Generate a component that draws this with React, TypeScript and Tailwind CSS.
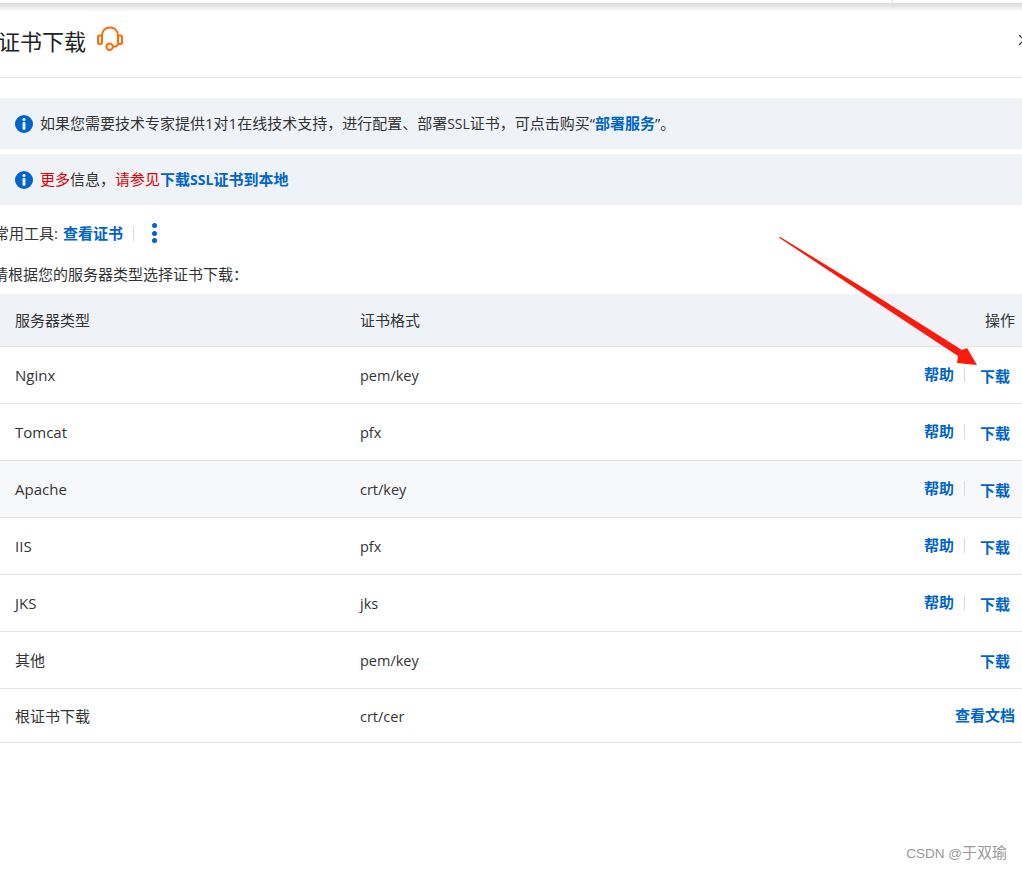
import { X } from 'lucide-react';

const rows = [
  { name: 'Nginx', format: 'pem/key', help: true },
  { name: 'Tomcat', format: 'pfx', help: true },
  { name: 'Apache', format: 'crt/key', help: true, shaded: true },
  { name: 'IIS', format: 'pfx', help: true },
  { name: 'JKS', format: 'jks', help: true },
  { name: '其他', format: 'pem/key', help: false },
];

function InfoIcon() {
  return (
    <svg width="18" height="18" viewBox="0 0 18 18" className="shrink-0">
      <circle cx="9" cy="9" r="9" fill="#0064c8" />
      <circle cx="9" cy="4.6" r="1.5" fill="#fff" />
      <rect x="7.6" y="7.2" width="2.8" height="7.4" fill="#fff" />
    </svg>
  );
}

function HeadsetIcon() {
  return (
    <svg width="28" height="26" viewBox="0 0 28 26" fill="none" stroke="#ff6a00" strokeWidth="2" className="ml-[10px] mt-[-4px]">
      <path d="M6 10C6 4.5 9.5 1.5 14 1.5S22 4.5 22 10" />
      <rect x="2" y="9.5" width="4" height="8.5" rx="1.5" />
      <rect x="22" y="9.5" width="4" height="8.5" rx="1.5" />
      <path d="M22 18C21.5 20 20 20.8 17 20.8" />
      <circle cx="13.6" cy="20.8" r="3.2" />
    </svg>
  );
}

function Row({ name, format, help, shaded }: { name: string; format: string; help: boolean; shaded?: boolean }) {
  return (
    <div className={`flex h-[57px] items-center border-b border-[#e3e3e3] text-[15px] text-[#333] ${shaded ? 'bg-[#f7f8fa]' : ''}`}>
      <span className="w-[360px] pl-[15px]">{name}</span>
      <span className="mt-[2px] flex-1 text-[14.5px]">{format}</span>
      <div className="flex items-center pr-[12px]">
        {help && (
          <>
            <a className="mt-[-2px] font-bold text-[#0064c8]">帮助</a>
            <span className="mx-[10px] mt-[-1px] h-[15px] w-px bg-[#d9d9d9]" />
          </>
        )}
        <a className="ml-[5px] mt-[2px] font-bold text-[#0064c8]">下载</a>
      </div>
    </div>
  );
}

export default function App() {
  return (
    <div className="relative h-[869px] w-[1022px] overflow-hidden bg-white font-['Open_Sans','Noto_Sans_CJK_SC',sans-serif] text-[#333]">
      <div className="flex h-[3px] justify-end pr-[129px]">
        <span className="w-px bg-[#e5e5e5]" />
      </div>
      <div className="h-[9px] bg-gradient-to-b from-[#d9d9d9] to-white" />

      <div className="flex h-[66px] items-center justify-between border-b border-[#e3e3e3] pb-[7px]">
        <div className="flex items-center">
          <h1 className="ml-[-2px] text-[22px] font-normal text-[#222]">证书下载</h1>
          <HeadsetIcon />
        </div>
        <X size={18} strokeWidth={1.6} className="mr-[-11px] mt-[-3px] text-[#333]" />
      </div>

      <div className="mt-[20px] flex h-[51px] items-center gap-[7px] bg-[#eff2f7] pl-[15px] text-[15px]">
        <InfoIcon />
        <p>
          如果您需要技术专家提供1对1在线技术支持，进行配置、部署<span className="text-[14px]">SSL</span>证书，可点击购买“<a className="font-bold text-[#0064c8]">部署服务</a>”。
        </p>
      </div>
      <div className="mt-[5px] flex h-[51px] items-center gap-[7px] bg-[#eff2f7] pl-[15px] text-[15px]">
        <InfoIcon />
        <p>
          <span className="text-[#e00000]">更多</span>信息，<span className="text-[#e00000]">请参见</span>
          <a className="font-bold text-[#0064c8]">下载<span className="text-[14px]">SSL</span>证书到本地</a>
        </p>
      </div>

      <div className="mt-[18px] flex h-[20px] items-center text-[15px]">
        <span className="ml-[-6px]">常用工具:</span>
        <a className="ml-[5px] font-bold text-[#0064c8]">查看证书</a>
        <span className="ml-[10px] h-[15px] w-px bg-[#d9d9d9]" />
        <span className="ml-[18px] flex flex-col gap-[2.5px]">
          <span className="h-[5px] w-[5px] rounded-full bg-[#0064c8]" />
          <span className="h-[5px] w-[5px] rounded-full bg-[#0064c8]" />
          <span className="h-[5px] w-[5px] rounded-full bg-[#0064c8]" />
        </span>
      </div>

      <p className="ml-[-7px] mt-[21px] h-[20px] text-[15px] leading-[20px]">请根据您的服务器类型选择证书下载：</p>

      <div className="mt-[10px]">
        <div className="flex h-[53px] items-center border-b border-[#e3e3e3] bg-[#eff2f7] text-[15px]">
          <span className="w-[360px] pl-[15px]">服务器类型</span>
          <span className="flex-1">证书格式</span>
          <span className="pr-[7px]">操作</span>
        </div>
        {rows.map((r) => (
          <Row key={r.name} {...r} />
        ))}
        <div className="flex h-[54px] items-center border-b border-[#e3e3e3] text-[15px]">
          <span className="mt-[2px] w-[360px] pl-[15px]">根证书下载</span>
          <span className="mt-[2px] flex-1 text-[14.5px]">crt/cer</span>
          <a className="pr-[7px] font-bold text-[#0064c8]">查看文档</a>
        </div>
      </div>

      <svg className="pointer-events-none absolute left-0 top-0" width="1022" height="869">
        <path d="M779.5 236.5L870 292L962 350L967 348L977 365L957 363L958 356L870 298L779.5 238Z" fill="#fb1a0e" />
      </svg>

      <span className="absolute bottom-[5px] right-[15px] font-['Liberation_Sans','Noto_Sans_CJK_SC',sans-serif] text-[15px] text-[#999]">
        <span className="text-[13.5px]">CSDN @</span>于双瑜
      </span>
    </div>
  );
}
